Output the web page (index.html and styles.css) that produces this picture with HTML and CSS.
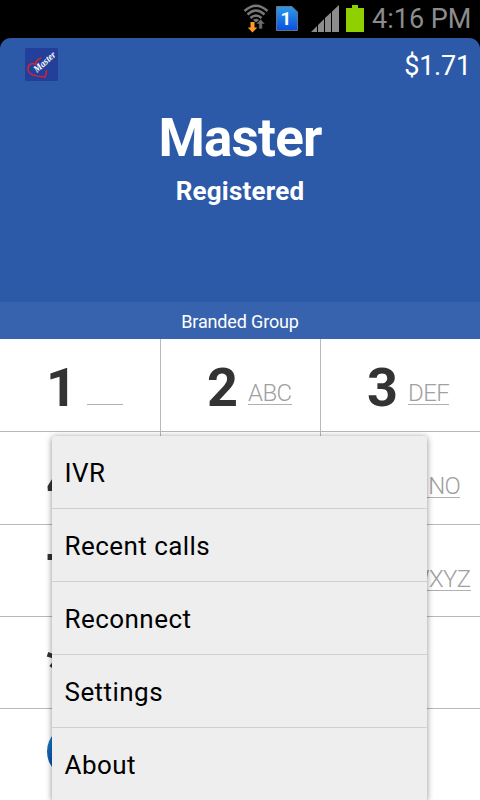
FILE: index.html
```html
<!DOCTYPE html>
<html lang="en">
<head>
  <meta charset="UTF-8">
  <meta name="viewport" content="width=device-width, initial-scale=1.0">
  <title>Master</title>
  <link rel="stylesheet" href="styles.css">
</head>
<body>

  <div class="status-bar">
    <svg class="wifi" width="28" height="30" viewBox="0 0 28 30">
      <g fill="none" stroke="#777" stroke-width="2.6">
        <path d="M2.500 7 Q14 -3.500 25.500 7"/>
        <path d="M5.500 10.500 Q14 2.500 22.500 10.500"/>
        <path d="M8.500 14 Q14 9 19.500 14"/>
      </g>
      <path d="M11 16 Q14 13.500 17 16 L14 18.500 Z" fill="#777"/>
      <path d="M8.500 18 h4 v5.500 h2.800 l-4.800 5 -4.800 -5 h2.800 z" fill="#ff9a2b"/>
      <path d="M16.800 25 v-5 h-2.800 l4.600 -5 4.600 5 h-2.800 v5 z" fill="#6b6b6b" stroke="#000" stroke-width=".6"/>
    </svg>
    <svg class="sim" width="22" height="25" viewBox="0 0 22 25">
      <defs>
        <linearGradient id="simFill" x1="0" y1="0" x2="0" y2="1">
          <stop offset="0" stop-color="#2e9be8"/>
          <stop offset="1" stop-color="#0b4fe0"/>
        </linearGradient>
      </defs>
      <path d="M.5 .5 H16 L21.500 6 V24.500 H.5 Z" fill="url(#simFill)" stroke="#62748a"/>
      <text x="10" y="19" text-anchor="middle">1</text>
    </svg>
    <svg class="signal" width="28" height="27" viewBox="0 0 28 27">
      <path d="M0 27 L6 21 V27 Z M7 27 V20 L13 14 V27 Z M14 27 V13 L20 7.500 V27 Z M21 27 V6.500 L28 0 V27 Z" fill="#8c8c8c"/>
    </svg>
    <svg class="battery" width="18" height="27" viewBox="0 0 18 27">
      <path d="M6 0 H12 V3 H18 V27 H0 V3 H6 Z" fill="#91d000"/>
    </svg>
    <span class="clock">4:16 PM</span>
  </div>

  <div class="header">
    <div class="top-row">
      <svg class="logo" width="33" height="33" viewBox="0 0 33 33">
        <rect width="33" height="33" rx="1.500" fill="#22409a"/>
        <path d="M16.500 10 C12 11 11 13 10.500 16.500 C7 14 2.500 17 3 21.500 C3.500 26.500 9 28.500 20 29 C21 27 21.500 25 21.500 22" fill="none" stroke="#e0202c" stroke-width="1.500"/>
        <text transform="translate(12 25) rotate(-42)" textLength="26" lengthAdjust="spacingAndGlyphs">Master</text>
      </svg>
      <span class="balance">$1.71</span>
    </div>
    <h1>Master</h1>
    <p class="state">Registered</p>
    <div class="group">Branded Group</div>
  </div>

  <div class="keypad">
    <div class="key"><b>1</b><span class="blank"></span></div>
    <div class="key"><b>2</b><span>ABC</span></div>
    <div class="key"><b>3</b><span>DEF</span></div>
    <div class="key"><b>4</b><span>GHI</span></div>
    <div class="key"><b>5</b><span>JKL</span></div>
    <div class="key"><b>6</b><span>MNO</span></div>
    <div class="key"><b>7</b><span>PQRS</span></div>
    <div class="key"><b>8</b><span>TUV</span></div>
    <div class="key"><b>9</b><span>WXYZ</span></div>
    <div class="key"><b>*</b></div>
    <div class="key"><b>0</b></div>
    <div class="key"><b>#</b></div>
    <div class="key"><i class="call"></i></div>
    <div class="key"></div>
    <div class="key"></div>
  </div>

  <ul class="menu">
    <li>IVR</li>
    <li>Recent calls</li>
    <li>Reconnect</li>
    <li>Settings</li>
    <li>About</li>
  </ul>

</body>
</html>
```
FILE: styles.css
```css
* {
  box-sizing: border-box;
}

body {
  margin: 0;
  width: 480px;
  height: 800px;
  position: relative;
  overflow: hidden;
  background-color: #000;
  font-family: Roboto, "Liberation Sans", sans-serif;
}

.status-bar {
  height: 38px;
  display: flex;
  align-items: flex-start;
  justify-content: flex-end;
  padding-right: 10px;
  color: #8c8c8c;
}

.wifi {
  margin: 4px 6px 0 0;
}

.sim {
  margin: 6px 13px 0 0;
}

.sim text {
  font-size: 19px;
  font-weight: bold;
  fill: #fff;
}

.signal {
  margin: 5px 7px 0 0;
}

.battery {
  margin: 5px 8px 0 0;
}

.clock {
  font-size: 27px;
  line-height: 39px;
  width: 98px;
  white-space: nowrap;
}

.header {
  height: 301px;
  display: flex;
  flex-direction: column;
  background-color: #2c5aa8;
  border-radius: 11px 11px 0 0;
  color: #fff;
  text-align: center;
}

.top-row {
  height: 62px;
  display: flex;
  justify-content: space-between;
  padding: 10px 9px 0 25px;
}

.logo text {
  font-family: "Liberation Serif", serif;
  font-size: 10px;
  font-style: italic;
  font-weight: bold;
  fill: #fff;
}

.balance {
  font-size: 27px;
  line-height: 37px;
  letter-spacing: -0.2px;
}

h1 {
  margin: 6px 0 0;
  font-size: 53px;
  line-height: 64px;
  letter-spacing: -0.8px;
}

.state {
  margin: 5px 0 0;
  font-size: 26px;
  font-weight: bold;
  line-height: 32px;
  letter-spacing: 0.2px;
}

.group {
  margin-top: auto;
  height: 37px;
  line-height: 39px;
  font-size: 18px;
  letter-spacing: -0.15px;
  background-color: #3763ae;
}

.keypad {
  display: grid;
  grid-template-columns: 161px 160px 159px;
  grid-template-rows: 93px 93px 92px 92px 92px;
  background-color: #fff;
}

.key {
  display: flex;
  align-items: flex-start;
  padding: 16px 0 0 46px;
  border-right: 1px solid #b8b8b8;
  border-bottom: 1px solid #b8b8b8;
  overflow: hidden;
}

.key:nth-child(3n) {
  border-right: none;
}

.key b {
  width: 41px;
  font-size: 54px;
  line-height: 65px;
  letter-spacing: -1px;
  color: #333;
}

.key span {
  margin-top: 24px;
  font-size: 24px;
  font-weight: 300;
  line-height: 28px;
  height: 26px;
  letter-spacing: -0.6px;
  color: #a0a0a0;
  border-bottom: 1px solid #b0b0b0;
}

.key .blank {
  width: 36px;
}

.call {
  width: 53px;
  height: 53px;
  margin: 0 0 0 1px;
  border-radius: 50%;
  background: linear-gradient(#1a8fd0, #0a3fa0);
}

.menu {
  position: absolute;
  top: 436px;
  left: 52px;
  width: 375px;
  margin: 0;
  padding: 0;
  list-style: none;
  background-color: #eee;
  border-radius: 3px;
  box-shadow: 0 1px 6px rgba(0, 0, 0, 0.45);
  color: #000;
}

.menu li {
  height: 73px;
  padding-left: 12.5px;
  font-size: 26px;
  letter-spacing: 0.45px;
  line-height: 75px;
  border-bottom: 1px solid #d0d0d0;
}
```
